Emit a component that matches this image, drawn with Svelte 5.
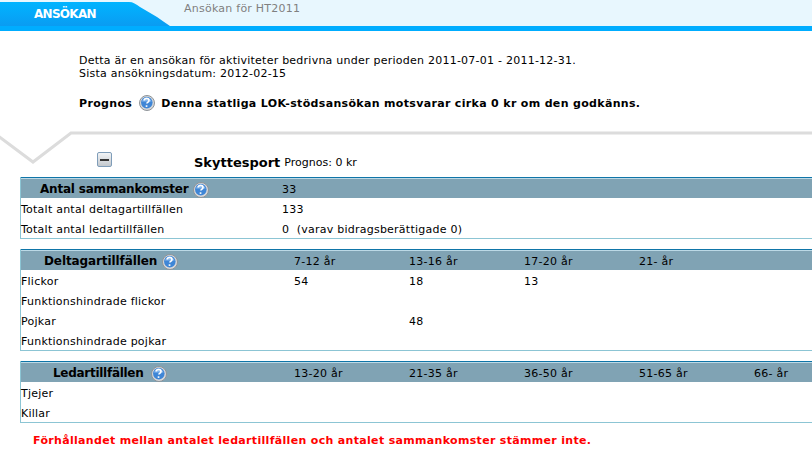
<script>
  const help = 'M5.1 5.3c.2-1.2 1.2-1.9 2.5-1.9 1.4 0 2.4.8 2.4 2 0 .9-.5 1.4-1.3 1.9-.6.4-.8.6-.8 1.2';

  const participantAges = ['7-12 år', '13-16 år', '17-20 år', '21- år'];
  const participantRows = [
    { label: 'Flickor', values: ['54', '18', '13', ''] },
    { label: 'Funktionshindrade flickor', values: ['', '', '', ''] },
    { label: 'Pojkar', values: ['', '48', '', ''] },
    { label: 'Funktionshindrade pojkar', values: ['', '', '', ''] }
  ];
  const leaderAges = ['13-20 år', '21-35 år', '36-50 år', '51-65 år', '66- år'];
  const leaderRows = ['Tjejer', 'Killar'];
</script>

{#snippet helpIcon()}
  <svg class="help" width="16" height="16" viewBox="0 0 16 16" aria-hidden="true">
    <circle cx="8" cy="8" r="7.5" fill="#d6d8da" stroke="#8e9398" stroke-width="1" />
    <circle cx="7.8" cy="7.6" r="5.8" fill="#3f86d6" />
    <path d="M3 6.5a5 4 0 0 1 9.6 0z" fill="#86b8ee" />
    <path d={help} fill="none" stroke="#fff" stroke-width="1.6" />
    <rect x="6.7" y="10.3" width="1.7" height="1.6" fill="#fff" />
  </svg>
{/snippet}

<div class="page">
  <header class="tabs">
    <div class="tab">
      <span class="tab-title">ANSÖKAN</span>
      <svg class="tab-edge" width="43" height="24" viewBox="0 2 43 24" aria-hidden="true">
        <defs>
          <linearGradient id="tabfill" x1="0" y1="0" x2="0" y2="1">
            <stop offset="0" stop-color="#00b4ff" />
            <stop offset="1" stop-color="#0a9cf2" />
          </linearGradient>
        </defs>
        <path d="M0 2h2C6 2 9 4 13 7L30 17Q37 22 43 26H0z" fill="url(#tabfill)" />
      </svg>
    </div>
    <span class="crumb">Ansökan för HT2011</span>
  </header>

  <section class="intro">
    <p>Detta är en ansökan för aktiviteter bedrivna under perioden 2011-07-01 - 2011-12-31.<br />Sista ansökningsdatum: 2012-02-15</p>
    <p class="prognos"><b>Prognos</b> {@render helpIcon()} <b>Denna statliga LOK-stödsansökan motsvarar cirka 0 kr om den godkänns.</b></p>
  </section>

  <div class="divider">
    <svg width="812" height="34" viewBox="0 0 812 34" aria-hidden="true">
      <path d="M-2 5 33 31 71 2H812" fill="none" stroke="#dcdcdc" stroke-width="3" />
    </svg>
  </div>

  <div class="sport">
    <span class="toggle"><span></span></span>
    <h2>Skyttesport</h2>
    <span class="sport-note">Prognos: 0 kr</span>
  </div>

  <table class="first">
    <thead>
      <tr><th class="name"><span class="pad-a">Antal sammankomster</span> {@render helpIcon()}</th><th class="num">33</th></tr>
    </thead>
    <tbody>
      <tr><td>Totalt antal deltagartillfällen</td><td class="num">133</td></tr>
      <tr><td>Totalt antal ledartillfällen</td><td class="num">0&nbsp; (varav bidragsberättigade 0)</td></tr>
    </tbody>
  </table>

  <table>
    <thead>
      <tr>
        <th class="name"><span class="pad-b">Deltagartillfällen</span> {@render helpIcon()}</th>
        {#each participantAges as age}<th class="age">{age}</th>{/each}
        <th class="age"></th>
      </tr>
    </thead>
    <tbody>
      {#each participantRows as row}
        <tr>
          <td>{row.label}</td>
          {#each row.values as value}<td>{value}</td>{/each}
          <td></td>
        </tr>
      {/each}
    </tbody>
  </table>

  <table>
    <thead>
      <tr>
        <th class="name"><span class="pad-c">Ledartillfällen</span> {@render helpIcon()}</th>
        {#each leaderAges as age}<th class="age">{age}</th>{/each}
      </tr>
    </thead>
    <tbody>
      {#each leaderRows as label}
        <tr><td>{label}</td><td></td><td></td><td></td><td></td><td></td></tr>
      {/each}
    </tbody>
  </table>

  <p class="warning">Förhållandet mellan antalet ledartillfällen och antalet sammankomster stämmer inte.</p>
</div>

<style>
  :global(body) {
    margin: 0;
    background: #fff;
    overflow: hidden;
  }
  .page {
    width: 812px;
    height: 459px;
    overflow: hidden;
    font-family: "DejaVu Sans", Verdana, sans-serif;
    font-size: 11px;
    line-height: 13px;
    letter-spacing: .24px;
    color: #000;
  }
  .tabs {
    height: 26px;
    display: flex;
    align-items: flex-start;
    background: #e8f7fe;
    border-bottom: 5px solid #00adff;
  }
  .tab {
    width: 170px;
    height: 26px;
    display: flex;
    flex: none;
    padding-top: 2px;
    box-sizing: border-box;
  }
  .tab-title {
    width: 127px;
    height: 24px;
    padding-left: 34px;
    box-sizing: border-box;
    background: linear-gradient(#00b4ff, #0a9cf2);
    color: #fff;
    font-weight: bold;
    font-size: 12px;
    letter-spacing: -.7px;
    line-height: 24px;
  }
  .tab-edge {
    flex: none;
  }
  .crumb {
    margin: 2px 0 0 14px;
    color: #808080;
  }
  .intro {
    padding: 23px 0 0 79px;
  }
  .intro p {
    margin: 0;
  }
  .intro .prognos {
    margin-top: 15px;
    display: flex;
    align-items: center;
    gap: 6.5px;
    height: 16px;
    letter-spacing: .33px;
  }
  .help {
    vertical-align: middle;
    flex: none;
  }
  .divider {
    height: 20px;
    margin-top: 20px;
  }
  .divider svg {
    display: block;
  }
  .sport {
    display: flex;
    height: 26px;
    padding-left: 97px;
  }
  .sport h2 {
    margin: 4px 4px 0 82px;
    font-size: 13px;
    line-height: 15px;
    letter-spacing: 0;
  }
  .sport-note {
    margin-top: 5px;
    letter-spacing: 0;
  }
  .toggle {
    width: 13px;
    height: 13px;
    margin-top: 1px;
    display: flex;
    align-items: center;
    justify-content: center;
    border: 1px solid #7f9db9;
    border-radius: 2px;
    background: linear-gradient(#f2f4f6, #c3c8cd);
  }
  .toggle span {
    width: 9px;
    height: 2px;
    background: #333;
  }
  table {
    width: 848px;
    margin: 0 0 10px 20px;
    border-collapse: collapse;
    table-layout: fixed;
    border: 1px solid #8cc5d4;
    border-top: 0;
  }
  thead tr {
    background: linear-gradient(#0f75a8 0 1px, #bcd9e6 1px 2px, #80a3b4 2px);
    height: 21px;
  }
  th {
    padding: 4px 0 0;
    font-weight: normal;
    text-align: left;
  }
  th.name {
    width: 273px;
    font-weight: bold;
    font-size: 12px;
  }
  th.age {
    width: 115px;
  }
  th.name span {
    display: inline-block;
  }
  .pad-a { padding-left: 19px; letter-spacing: -.2px; }
  .pad-b { padding-left: 23px; letter-spacing: -.1px; }
  .pad-c { padding-left: 32px; margin-right: 3px; letter-spacing: -.28px; }
  .first th.name { width: 261px; }
  td {
    padding: 2px 0 0;
    height: 18px;
  }
  .warning {
    margin: 11px 0 0 33px;
    color: #ff0000;
    font-weight: bold;
    letter-spacing: .32px;
  }
</style>
